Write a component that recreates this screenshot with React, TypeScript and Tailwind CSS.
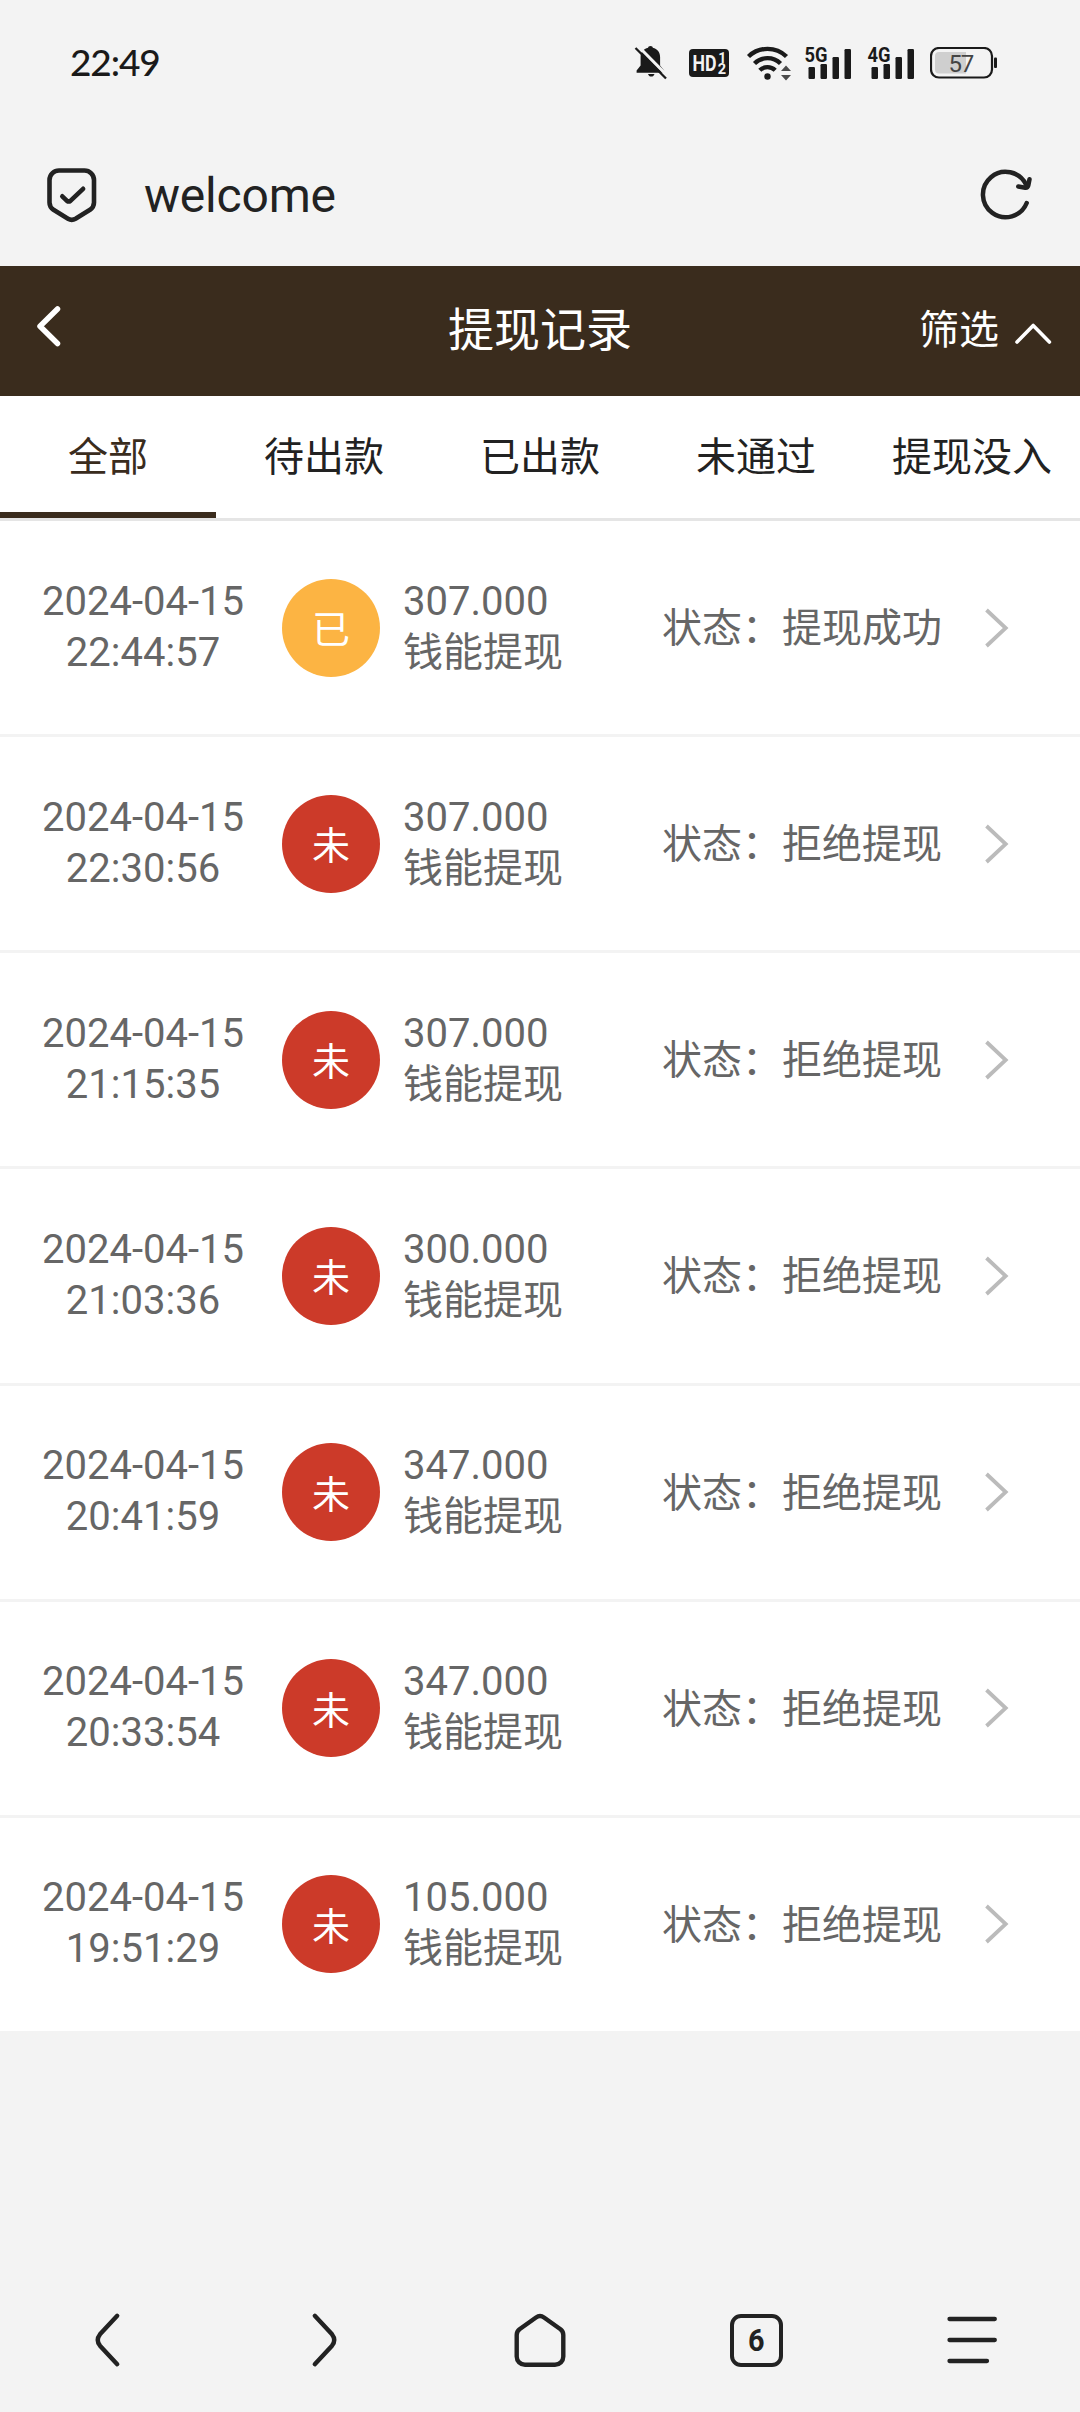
interface WithdrawRecord {
  date: string;
  time: string;
  amount: string;
  success: boolean;
}

const tabs = ['全部', '待出款', '已出款', '未通过', '提现没入'];

const records: WithdrawRecord[] = [
  { date: '2024-04-15', time: '22:44:57', amount: '307.000', success: true },
  { date: '2024-04-15', time: '22:30:56', amount: '307.000', success: false },
  { date: '2024-04-15', time: '21:15:35', amount: '307.000', success: false },
  { date: '2024-04-15', time: '21:03:36', amount: '300.000', success: false },
  { date: '2024-04-15', time: '20:41:59', amount: '347.000', success: false },
  { date: '2024-04-15', time: '20:33:54', amount: '347.000', success: false },
  { date: '2024-04-15', time: '19:51:29', amount: '105.000', success: false },
];

const BellOffIcon = () => (
  <svg width="34" height="36" viewBox="634 44 34 36">
    <path
      d="M650.500 45c1.500 0 2.200.8 2.300 1.800 4.600 1.100 7.300 4.700 7.300 9.200v8.500l4 5v2.300h-27.500v-2.300l4-5V56c0-4.500 2.900-8.100 7.500-9.200.1-1 .9-1.800 2.400-1.800z"
      fill="#1a1a1a"
    />
    <path d="M648 73h6.500c-.5 1.700-1.700 2.600-3.200 2.600s-2.800-.9-3.300-2.600z" fill="#1a1a1a" />
    <path d="M638 45l30 30.500" stroke="#f3f3f3" strokeWidth="3" />
    <path d="M635.500 47l30.500 30.500" stroke="#1a1a1a" strokeWidth="2.300" />
  </svg>
);

const HdIcon = () => (
  <svg width="40" height="28" viewBox="0 0 40 28" fontFamily="Roboto, sans-serif" fontWeight="700" fill="#f3f3f3">
    <rect width="40" height="28" rx="4" fill="#1a1a1a" />
    <text x="3.500" y="22" fontSize="21.500" textLength="24" lengthAdjust="spacingAndGlyphs">
      HD
    </text>
    <text x="29.300" y="13.500" fontSize="14">
      1
    </text>
    <text x="28.800" y="25.200" fontSize="14.500">
      2
    </text>
  </svg>
);

const WifiIcon = () => (
  <svg width="46" height="36" viewBox="746 43 46 36">
    <g fill="none" stroke="#1a1a1a" strokeWidth="4.400">
      <path d="M748.500 54.500a27.500 27.500 0 0 1 38 0" />
      <path d="M754.500 61.500a18.500 18.500 0 0 1 26 0" />
      <path d="M759.800 68.300a11 11 0 0 1 15.400 0" />
    </g>
    <circle cx="767.500" cy="74.500" r="3.200" fill="#1a1a1a" />
    <path d="M781 69l5-5.500 5 5.500zM781 73l5 5.500 5-5.500z" fill="#4a4a4a" />
  </svg>
);

const SignalIcon = ({ label }: { label: string }) => (
  <svg width="48" height="42" viewBox="804 39 48 42">
    <g fill="#1a1a1a">
      <rect x="808.500" y="65" width="6.500" height="12" rx="1.200" />
      <rect x="820.500" y="62" width="6.500" height="15" rx="1.200" />
      <rect x="832.500" y="55" width="6.500" height="22" rx="1.200" />
      <rect x="844.500" y="47" width="6.500" height="30" rx="1.200" />
      <text
        x="804.500"
        y="60"
        fontSize="20.500"
        fontWeight="700"
        fontFamily="Roboto, sans-serif"
        textLength="23"
        lengthAdjust="spacingAndGlyphs"
      >
        {label}
      </text>
    </g>
  </svg>
);

const BatteryIcon = () => (
  <svg width="68" height="32" viewBox="930 47 68 32">
    <rect x="931" y="48" width="61" height="29.500" rx="8" fill="none" stroke="#1a1a1a" strokeWidth="2.200" />
    <path d="M939 52h27v21.500h-27a4 4 0 0 1-4-4V56a4 4 0 0 1 4-4z" fill="#cfcfcf" />
    <rect x="994" y="57.500" width="3" height="10.500" rx="1" fill="#1a1a1a" />
    <text x="948.500" y="71.500" fontSize="24" letterSpacing="-1.200" fontFamily="Roboto, sans-serif" fill="#444">
      57
    </text>
  </svg>
);

const StatusBar = () => (
  <div className="flex h-[125px] items-center pr-[82px] pl-[70px] text-[#1a1a1a]">
    <span className="pb-[3px] font-[Lato,sans-serif] text-[37px] leading-none font-medium tracking-[-1.1px]">22:49</span>
    <div className="ml-auto flex items-center">
      <BellOffIcon />
      <div className="ml-[21px]">
        <HdIcon />
      </div>
      <div className="ml-[17px]">
        <WifiIcon />
      </div>
      <div className="ml-3 pb-[2px]">
        <SignalIcon label="5G" />
      </div>
      <div className="ml-[15px] pb-[2px]">
        <SignalIcon label="4G" />
      </div>
      <div className="ml-[15px]">
        <BatteryIcon />
      </div>
    </div>
  </div>
);

const AddressBar = () => (
  <div className="flex h-[141px] items-center pr-[45px] pb-[2px] pl-[45px] text-[#222]">
    <svg width="54" height="58" viewBox="45 166 54 58" fill="none" stroke="currentColor" strokeLinecap="round" strokeLinejoin="round" strokeWidth="4.600">
      <path d="M59.500 170.500h25a9.500 9.500 0 0 1 9.500 9.500v22.500q0 4.500-4 7.300l-14.500 8.900q-3.800 2.200-7.500 0l-14.500-8.900q-4-2.800-4-7.300V180a9.500 9.500 0 0 1 10-9.500z" />
      <path d="M62.300 196.300l4.700 4.500q1.700 1.300 3.400 0l12.700-12" />
    </svg>
    <span className="mt-[2px] ml-[45px] text-[48px] leading-none tracking-[-0.2px]">welcome</span>
    <svg className="ml-auto" width="56" height="56" viewBox="979 166 56 56" fill="none" stroke="currentColor" strokeLinecap="round" strokeLinejoin="round" strokeWidth="4.500">
      <path d="M1026 183.500a22.700 22.700 0 1 0 .7 18.500" />
      <path d="M1018.300 185.500l7 1.200q2.300.2 2.900-2l1.300-6.500" />
    </svg>
  </div>
);

const PageHeader = () => (
  <header className="grid h-[130px] grid-cols-3 items-center bg-[#3a2c1d] text-white">
    <svg className="mb-[10px] ml-[35px]" width="28" height="44" viewBox="35 304 28 44" fill="none" stroke="currentColor" strokeLinecap="round" strokeLinejoin="round" strokeWidth="5.500">
      <path d="M57.500 309L40 326.300 57.500 343.500" />
    </svg>
    <h1 className="pb-[3px] text-center text-[46px] leading-none">提现记录</h1>
    <div className="flex items-center justify-end pr-[27px]">
      <span className="text-[40px] leading-none">筛选</span>
      <svg className="mt-[5px] ml-[14px]" width="40" height="26" viewBox="1013 320 40 26" fill="none" stroke="currentColor" strokeLinecap="round" strokeLinejoin="round" strokeWidth="3.600">
        <path d="M1017 341l16.200-16.500 16.200 16.500" />
      </svg>
    </div>
  </header>
);

const TabBar = () => (
  <nav className="grid h-[125px] grid-cols-5 border-b-3 border-[#e5e5e5] bg-white">
    {tabs.map((tab, index) => (
      <div
        key={tab}
        className={`flex items-center justify-center border-b-6 pt-[7px] text-[40px] leading-none whitespace-nowrap ${
          index === 0 ? 'border-[#3a2c1d] text-[#3a2c1d]' : 'border-transparent text-[#222]'
        }`}
      >
        <span>{tab}</span>
      </div>
    ))}
  </nav>
);

const RecordRow = ({ record }: { record: WithdrawRecord }) => (
  <li className="flex h-[216.150px] items-center border-b-3 border-[#f3f3f3] bg-white pr-[70px] pl-[42px] text-[40px] leading-[51px] text-[#666]">
    <div className="-ml-px w-[204px] pb-[2px] text-center whitespace-nowrap">
      <p>{record.date}</p>
      <p>{record.time}</p>
    </div>
    <div
      className={`ml-[37px] flex size-[98px] items-center justify-center rounded-full pt-[6px] text-[38px] text-white ${
        record.success ? 'bg-[#fcb443]' : 'bg-[#cc3a29]'
      }`}
    >
      {record.success ? '已' : '未'}
    </div>
    <div className="ml-[23px] pb-[2px]">
      <p>{record.amount}</p>
      <p>钱能提现</p>
    </div>
    <p className="mt-[2px] mr-[42px] ml-auto">状态：{record.success ? '提现成功' : '拒绝提现'}</p>
    <svg width="26" height="42" viewBox="984 606.500 26 42" fill="none" stroke="#bbb" strokeWidth="3.800">
      <path d="M986.500 609.500l19.200 18-19.200 18" />
    </svg>
  </li>
);

const BottomNav = () => (
  <footer className="grid h-36 grid-cols-5 items-center justify-items-center text-[#222]">
    <svg width="60" height="60" viewBox="78 2310 60 60" fill="none" stroke="currentColor" strokeLinecap="round" strokeWidth="4.400">
      <path d="M117.200 2315.800l-17.200 18.500q-4.500 5.700 0 11.400l17.200 18.500" />
    </svg>
    <svg width="60" height="60" viewBox="294 2310 60 60" fill="none" stroke="currentColor" strokeLinecap="round" strokeWidth="4.400">
      <path d="M314.800 2315.800l17.200 18.500q4.500 5.700 0 11.400l-17.200 18.500" />
    </svg>
    <svg width="60" height="60" viewBox="510 2310 60 60" fill="none" stroke="currentColor" strokeLinejoin="round" strokeWidth="4.400">
      <path d="M536 2317.500q4-2.800 8 0l16.500 11.700q2.800 2.200 2.800 5.800v21.500a8.300 8.300 0 0 1-8.300 8.300h-30a8.300 8.300 0 0 1-8.300-8.300V2335q0-3.600 2.800-5.800z" />
    </svg>
    <div className="flex h-[53px] w-[53px] items-center justify-center rounded-[11px] border-4 border-current text-[32px] leading-none font-bold">
      <span className="scale-x-90">6</span>
    </div>
    <svg width="60" height="60" viewBox="942 2310 60 60" fill="none" stroke="currentColor" strokeLinecap="round" strokeWidth="4.300">
      <path d="M949.500 2319h45.300M949.500 2340h45.300M949.500 2361h37.500" />
    </svg>
  </footer>
);

const App = () => {
  return (
    <div className="flex h-[2412px] w-[1080px] flex-col bg-[#f3f3f3] font-[Roboto,'Noto_Sans_CJK_SC',sans-serif]">
      <StatusBar />
      <AddressBar />
      <PageHeader />
      <TabBar />
      <ul>
        {records.map(record => (
          <RecordRow key={record.time} record={record} />
        ))}
      </ul>
      <div className="mt-auto">
        <BottomNav />
      </div>
    </div>
  );
};

export default App;
